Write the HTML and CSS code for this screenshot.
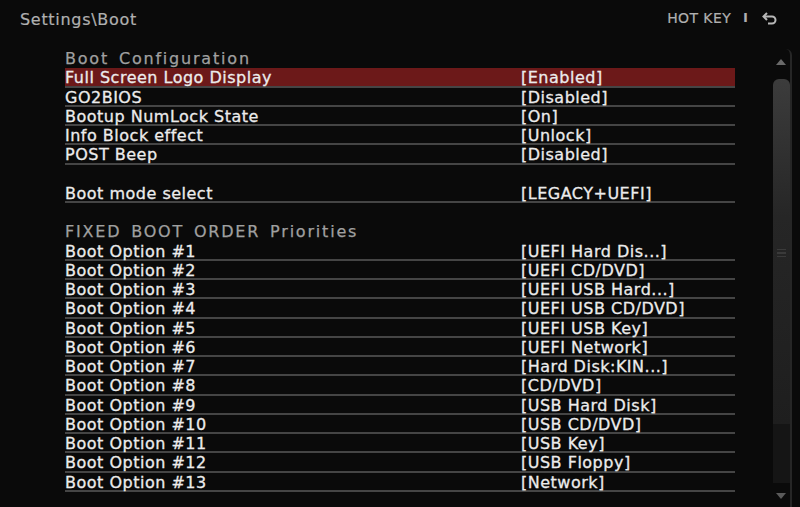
FILE: index.html
```html
<!DOCTYPE html>
<html lang="en">
<head>
    <meta charset="UTF-8">
    <title>Settings\Boot</title>
    <link rel="stylesheet" href="styles.css">
</head>
<body>
    <header class="topbar">
        <div class="path">Settings\Boot</div>
        <div class="hotkey">
            <span>HOT KEY</span>
            <span class="sep">I</span>
            <svg class="back" width="16" height="14" viewBox="0 0 16 14">
                <path d="M5 1 L1.5 4.5 L5 8" fill="none" stroke="#b8b8b8" stroke-width="2"/>
                <path d="M2 4.5 H10 A3.5 3.5 0 0 1 10 11.5 H6" fill="none" stroke="#b8b8b8" stroke-width="2"/>
            </svg>
        </div>
    </header>

    <div class="content">
        <ul class="list">
            <li class="group">Boot Configuration</li>
            <li class="row selected"><span class="name">Full Screen Logo Display</span><span class="value">[Enabled]</span></li>
            <li class="row"><span class="name">GO2BIOS</span><span class="value">[Disabled]</span></li>
            <li class="row"><span class="name">Bootup NumLock State</span><span class="value">[On]</span></li>
            <li class="row"><span class="name">Info Block effect</span><span class="value">[Unlock]</span></li>
            <li class="row"><span class="name">POST Beep</span><span class="value">[Disabled]</span></li>
            <li class="blank"></li>
            <li class="row"><span class="name">Boot mode select</span><span class="value">[LEGACY+UEFI]</span></li>
            <li class="blank"></li>
            <li class="group">FIXED BOOT ORDER Priorities</li>
            <li class="row"><span class="name">Boot Option #1</span><span class="value">[UEFI Hard Dis...]</span></li>
            <li class="row"><span class="name">Boot Option #2</span><span class="value">[UEFI CD/DVD]</span></li>
            <li class="row"><span class="name">Boot Option #3</span><span class="value">[UEFI USB Hard...]</span></li>
            <li class="row"><span class="name">Boot Option #4</span><span class="value">[UEFI USB CD/DVD]</span></li>
            <li class="row"><span class="name">Boot Option #5</span><span class="value">[UEFI USB Key]</span></li>
            <li class="row"><span class="name">Boot Option #6</span><span class="value">[UEFI Network]</span></li>
            <li class="row"><span class="name">Boot Option #7</span><span class="value">[Hard Disk:KIN...]</span></li>
            <li class="row"><span class="name">Boot Option #8</span><span class="value">[CD/DVD]</span></li>
            <li class="row"><span class="name">Boot Option #9</span><span class="value">[USB Hard Disk]</span></li>
            <li class="row"><span class="name">Boot Option #10</span><span class="value">[USB CD/DVD]</span></li>
            <li class="row"><span class="name">Boot Option #11</span><span class="value">[USB Key]</span></li>
            <li class="row"><span class="name">Boot Option #12</span><span class="value">[USB Floppy]</span></li>
            <li class="row"><span class="name">Boot Option #13</span><span class="value">[Network]</span></li>
        </ul>

        <div class="scrollbar">
            <div class="arrow up"></div>
            <div class="thumb"><div class="grip"></div></div>
            <div class="track"></div>
            <div class="arrow down"></div>
        </div>
    </div>
</body>
</html>
```

FILE: styles.css
```css
body {
    margin: 0;
    padding: 0;
    background-color: #0a0a0a;
    color: #ececec;
    font-family: "DejaVu Sans", "Open Sans", sans-serif;
    width: 800px;
    height: 507px;
    overflow: hidden;
}
.topbar {
    height: 49px;
    display: flex;
    justify-content: space-between;
    align-items: flex-start;
    padding: 0 20px;
    box-sizing: border-box;
}
.path {
    font-size: 16px;
    letter-spacing: 0.7px;
    color: #b0b0b0;
    -webkit-text-stroke: 0.2px #b0b0b0;
    margin-top: 10px;
}
.hotkey {
    display: flex;
    align-items: center;
    margin-top: 10px;
    margin-right: 2px;
    font-size: 14px;
    letter-spacing: 0.4px;
    color: #b0b0b0;
    -webkit-text-stroke: 0.2px #b0b0b0;
}
.hotkey .sep {
    margin: 0 14px 0 12px;
    font-size: 12px;
    font-weight: bold;
}
.hotkey .back {
    margin-top: 1px;
}
.content {
    display: flex;
}
.list {
    list-style: none;
    margin: 0 0 0 65px;
    padding: 0;
    width: 670px;
}
.list li {
    height: 19.25px;
    box-sizing: border-box;
    font-size: 16px;
    line-height: 18px;
}
.group {
    color: #a0a0a0;
    letter-spacing: 1.8px;
    word-spacing: 3px;
    padding-top: 1px;
    -webkit-text-stroke: 0.25px #a0a0a0;
}
.row {
    display: flex;
    padding-top: 1px;
    letter-spacing: 0.5px;
    -webkit-text-stroke: 0.3px #ececec;
    border-bottom: 2px solid #454545;
}
.row .name {
    width: 456px;
}
.row.selected {
    background: #6c1919;
}
.scrollbar {
    margin-left: 38px;
    width: 19px;
    height: 458px;
    display: flex;
    flex-direction: column;
    align-items: flex-start;
    border-right: 2px solid #262626;
    border-top-right-radius: 6px;
    box-sizing: border-box;
}
.arrow {
    width: 0;
    height: 0;
    border-left: 5px solid transparent;
    border-right: 5px solid transparent;
    margin-left: 3px;
}
.arrow.up {
    border-bottom: 6px solid #6a6a6a;
    margin-top: 10px;
    margin-bottom: 14px;
}
.arrow.down {
    border-top: 6px solid #5a5a5a;
    margin-top: 10px;
    margin-bottom: 8px;
}
.thumb {
    width: 17px;
    height: 345px;
    border-radius: 6px 6px 0 0;
    background: linear-gradient(#3c3c3c, #262626 40%, #1e1e1e);
    display: flex;
    justify-content: center;
}
.grip {
    width: 9px;
    height: 6px;
    margin-top: 170px;
    border-top: 1px solid #3a3a3a;
    border-bottom: 1px solid #3a3a3a;
    background: linear-gradient(transparent 40%, #3a3a3a 40%, #3a3a3a 60%, transparent 60%);
}
.track {
    width: 17px;
    flex: 1;
    background: #151515;
}
```
